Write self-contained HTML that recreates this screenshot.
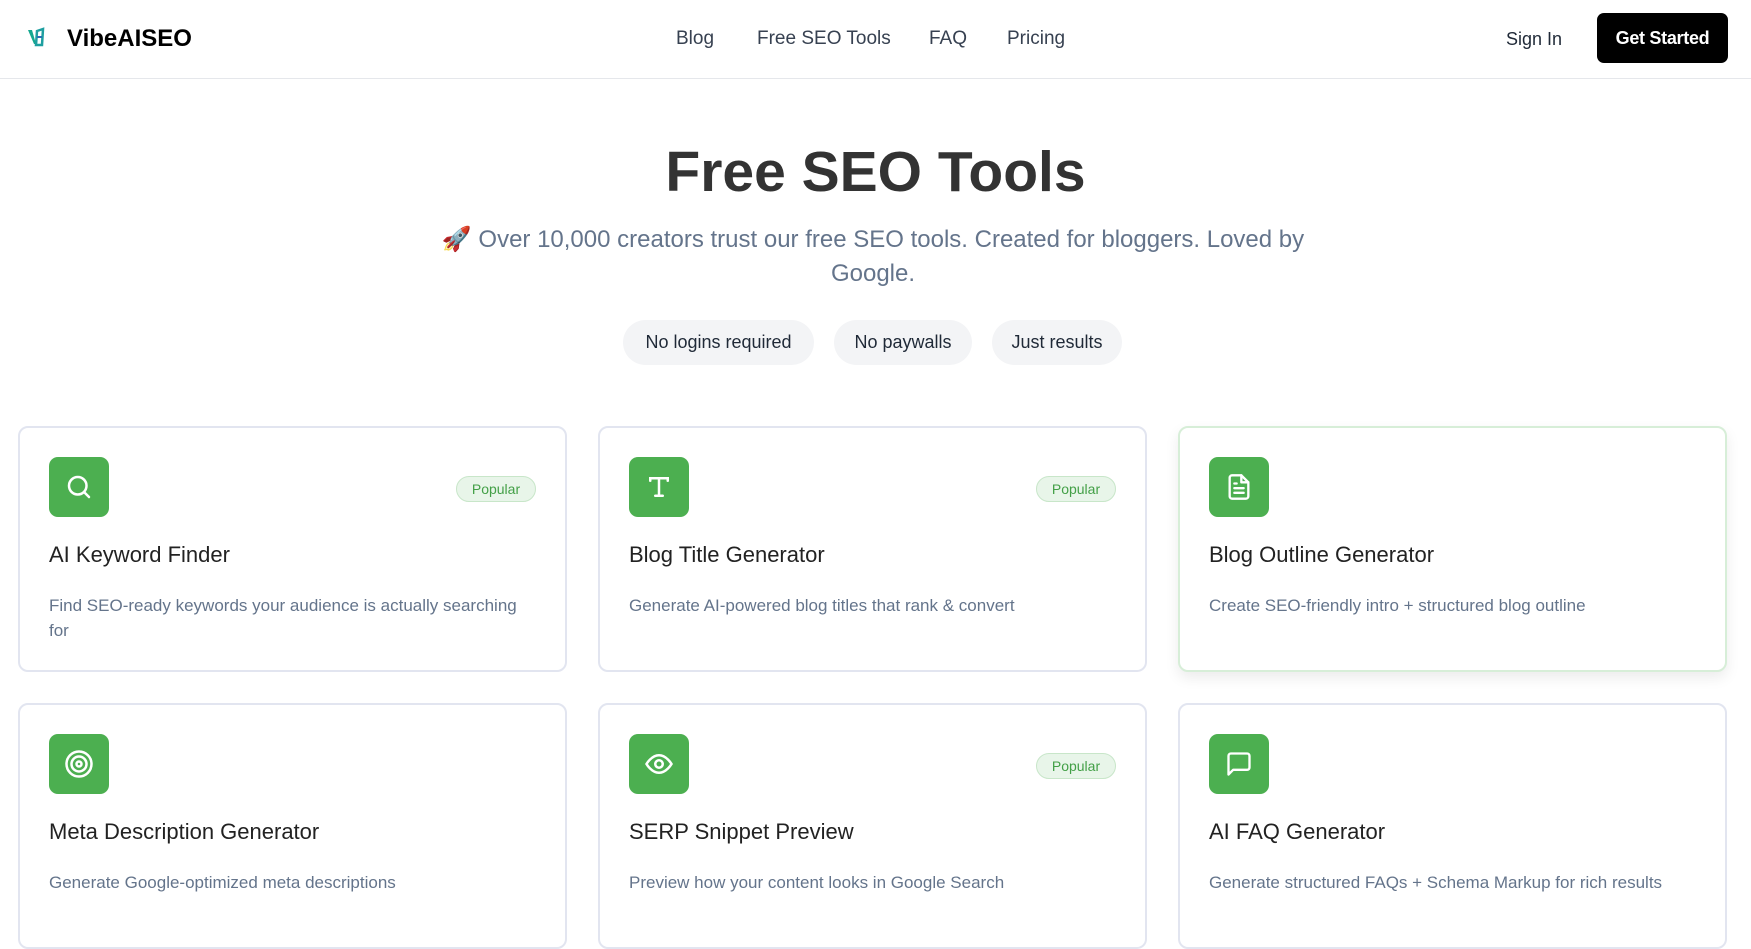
<!DOCTYPE html>
<html><head><meta charset="utf-8"><style>
*{box-sizing:border-box;margin:0;padding:0}
body{width:1751px;height:877px;overflow:hidden;background:#fff;font-family:"Liberation Sans","DejaVu Sans",sans-serif;color:#1f2937;position:relative}
.nav{position:absolute;left:0;top:0;width:1751px;height:79px;border-bottom:1px solid #e5e7eb}
.abs{position:absolute;white-space:nowrap}
.navl{font-size:19px;color:#374151;top:28px}
.btn{left:1597px;top:13px;width:131px;height:50px;background:#000;color:#fff;border-radius:7px;font-size:18px;font-weight:bold;text-align:center;line-height:50px;letter-spacing:-0.3px}
h1{position:absolute;left:0;width:1751px;text-align:center;top:139px;font-size:57px;font-weight:bold;color:#333}
.sub{position:absolute;left:420px;width:906px;text-align:center;top:223px;font-size:24px;line-height:34px;color:#64748b}
.pill{position:absolute;top:320px;height:45px;line-height:45px;background:#f3f4f6;border-radius:23px;font-size:18px;text-align:center;color:#1f2937}
.card{position:absolute;width:549px;height:246px;border:2px solid #e2e5f0;border-radius:10px;background:#fff}
.ic{position:absolute;left:29px;top:29px;width:60px;height:60px;background:#4caf50;border-radius:9px;display:flex;align-items:center;justify-content:center}
.t{position:absolute;left:29px;top:114px;font-size:22px;color:#222}
.d{position:absolute;left:29px;top:165px;width:480px;font-size:17px;line-height:25px;color:#64748b}
.pop{position:absolute;right:29px;top:48px;width:80px;height:26px;border:1px solid #c8e6c9;background:#e8f5e9;border-radius:13px;color:#43a047;font-size:14px;text-align:center;line-height:24px}
</style></head><body>
<div class="nav">
<svg class="abs" style="left:27px;top:27px" width="20" height="22" viewBox="0 0 20 22"><path d="M1 3 L7 17 L9 17 L5 3Z" fill="#14a88f"/><path d="M10 4 L16 2 L15 18 L9 18Z" fill="none" stroke="#1e9fa0" stroke-width="2.5"/><path d="M10 10 L15 10" stroke="#2a6fb5" stroke-width="2"/></svg>
<div class="abs" style="left:67px;top:25px;font-size:24px;font-weight:bold;color:#000">VibeAISEO</div>
<div class="abs navl" style="left:676px">Blog</div>
<div class="abs navl" style="left:757px">Free SEO Tools</div>
<div class="abs navl" style="left:929px">FAQ</div>
<div class="abs navl" style="left:1007px">Pricing</div>
<div class="abs navl" style="left:1506px;color:#1f2937;top:29px;font-size:18px">Sign In</div>
<div class="abs btn">Get Started</div>
</div>
<h1>Free SEO Tools</h1>
<div class="sub">🚀 Over 10,000 creators trust our free SEO tools. Created for bloggers. Loved by Google.</div>
<div class="pill" style="left:623px;width:191px">No logins required</div>
<div class="pill" style="left:834px;width:138px">No paywalls</div>
<div class="pill" style="left:992px;width:130px">Just results</div>

<div class="card" style="left:18px;top:426px"><div class="ic"><svg width="30" height="30" viewBox="0 0 24 24" fill="none" stroke="#fff" stroke-width="2" stroke-linecap="round"><circle cx="11" cy="11" r="7"/><path d="M16 16l4 4"/></svg></div><div class="pop">Popular</div><div class="t">AI Keyword Finder</div><div class="d">Find SEO-ready keywords your audience is actually searching for</div></div>
<div class="card" style="left:598px;top:426px"><div class="ic"><svg width="30" height="30" viewBox="0 0 24 24" fill="none" stroke="#fff" stroke-width="2" stroke-linecap="round"><path d="M5 7V5h14v2M12 5v14M9 19h6"/></svg></div><div class="pop">Popular</div><div class="t">Blog Title Generator</div><div class="d">Generate AI-powered blog titles that rank &amp; convert</div></div>
<div class="card" style="left:1178px;top:426px;border-color:#d7eed8;box-shadow:0 6px 14px rgba(0,0,0,.08)"><div class="ic"><svg width="28" height="28" viewBox="0 0 24 24" fill="none" stroke="#fff" stroke-width="2" stroke-linecap="round" stroke-linejoin="round"><path d="M14 2H6a2 2 0 0 0-2 2v16a2 2 0 0 0 2 2h12a2 2 0 0 0 2-2V8z"/><path d="M14 2v6h6M8 13h8M8 17h8M8 9h2"/></svg></div><div class="t">Blog Outline Generator</div><div class="d">Create SEO-friendly intro + structured blog outline</div></div>

<div class="card" style="left:18px;top:703px"><div class="ic"><svg width="30" height="30" viewBox="0 0 24 24" fill="none" stroke="#fff" stroke-width="2"><circle cx="12" cy="12" r="10"/><circle cx="12" cy="12" r="6"/><circle cx="12" cy="12" r="2"/></svg></div><div class="t">Meta Description Generator</div><div class="d">Generate Google-optimized meta descriptions</div></div>
<div class="card" style="left:598px;top:703px"><div class="ic"><svg width="30" height="30" viewBox="0 0 24 24" fill="none" stroke="#fff" stroke-width="2"><path d="M2 12s4-7 10-7 10 7 10 7-4 7-10 7S2 12 2 12z"/><circle cx="12" cy="12" r="3"/></svg></div><div class="pop">Popular</div><div class="t">SERP Snippet Preview</div><div class="d">Preview how your content looks in Google Search</div></div>
<div class="card" style="left:1178px;top:703px"><div class="ic"><svg width="28" height="28" viewBox="0 0 24 24" fill="none" stroke="#fff" stroke-width="2" stroke-linejoin="round"><path d="M21 15a2 2 0 0 1-2 2H7l-4 4V5a2 2 0 0 1 2-2h14a2 2 0 0 1 2 2z"/></svg></div><div class="t">AI FAQ Generator</div><div class="d">Generate structured FAQs + Schema Markup for rich results</div></div>
</body></html>
